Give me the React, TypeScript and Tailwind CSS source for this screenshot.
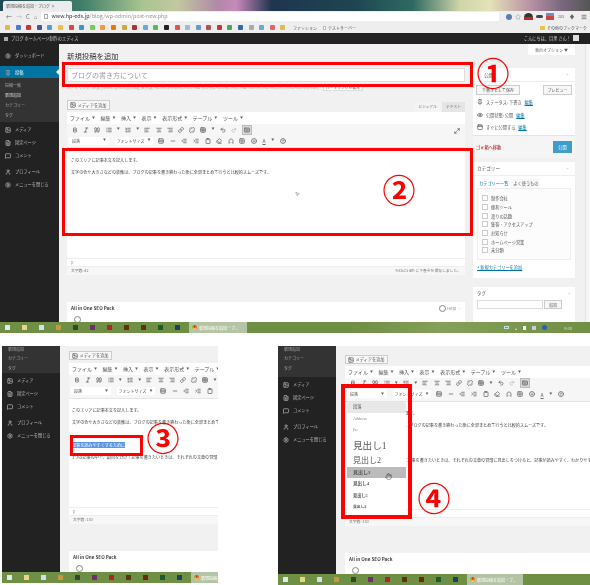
import React from "react";
import {
    AlignCenter, AlignLeft, AlignRight, Bold, Calendar, ChevronUp, Clipboard, Eraser, Eye, Grid2x2, Hand,
    HelpCircle, Image, Indent, Italic, Keyboard, Link, List, ListOrdered, Maximize2, MessageSquare, Minus, MousePointer2,
    Omega, Outdent, Pin, Quote, Redo2, Rows3, Settings, Smile, Star, Table, Undo2, Unlink, User, FileText, Menu
} from "lucide-react";

const Ic = ({icon: Icon, className = "text-[#666]"}: {icon: any; className?: string}) => <Icon className={"w-[6px] h-[6px] shrink-0 " + className} strokeWidth={3}/>;

const Arrow = () => <span className="text-[3px] text-[#666]">▼</span>;

const Taskbar = ({tabWidth, label, gradient}: {tabWidth: string; label: string; gradient?: boolean}) => {
    const colors = ["bg-[#dfe8ef]", "bg-[#e8d58a]", "bg-[#cfe0f0]", "bg-[#c69a3c]", "bg-[#2d4a2d]", "bg-[#6d2f70]", "bg-[#b3222b]", "bg-[#5a3510]", "bg-[#6a2c10]", "bg-[#1c5c2c]", "bg-[#1d3f63]"];
    return <div className={"h-[11px] flex items-center pl-[5px] shrink-0 " + (gradient ? "bg-[linear-gradient(90deg,#6f8f45,#6f8f45_60%,#85a058_75%,#6f8f45)]" : "bg-[#6f8f45]")}>
        {colors.map((c, i) => <div key={i} className="w-[17px] shrink-0 flex"><span className={"w-[5px] h-[5px] " + c}/></div>)}
        <div className={"ml-[-3px] h-full bg-[#b5c4a4] flex items-center gap-[2px] px-[3px] overflow-hidden shrink-0 text-[4px] text-white whitespace-nowrap " + tabWidth}>
            <span className="w-[5px] h-[5px] rounded-full bg-[conic-gradient(#d33,#fc3,#3a5)] shrink-0"/>{label}
        </div>
        {gradient && <div className="ml-auto mr-[18px] flex items-center gap-[6px] text-[4px] text-[#dde]">
            <span className="w-[5px] h-[3px] border border-[#cdd]"/><span>▴</span><span className="w-[3px] h-[4px] bg-white"/><span className="w-[4px] h-[4px] bg-[#ccd]"/><span className="w-[5px] h-[5px] rounded-full bg-[#2b5fb0]"/>
            <span className="ml-[11px]">9:30</span>
        </div>}
    </div>;
};

const MenuItem = ({icon, label, className = ""}: {icon: any; label: string; className?: string}) =>
    <div className={"flex items-center gap-[4px] pl-[5px] h-[13px] text-[4.2px] text-[#bbb] whitespace-nowrap " + className}>
        <Ic icon={icon} className="text-[#aaa]"/>{label}
    </div>;

const LowerMenu = () => <>
    <MenuItem icon={Image} label="メディア" className="mt-[1px]"/>
    <MenuItem icon={FileText} label="固定ページ"/>
    <MenuItem icon={MessageSquare} label="コメント"/>
    <MenuItem icon={User} label="プロフィール" className="mt-[3px]"/>
    <MenuItem icon={Settings} label="メニューを閉じる"/>
</>;

const MenuBar = () => <div className="h-[12px] bg-white flex items-center gap-[5.5px] px-[3px] text-[5px] text-[#555] whitespace-nowrap">
    {["ファイル", "編集", "挿入", "表示", "表示形式", "テーブル", "ツール"].map(m => <span key={m} className="flex items-center gap-[2px]">{m}<Arrow/></span>)}
</div>;

const Toolbar = () => <div className="bg-[#f6f6f6] h-[24px] border-b border-[#e5e5e5] px-[5px] flex flex-col">
    <div className="h-[11px] flex items-center gap-[5.2px]">
        <Ic icon={Bold}/><Ic icon={Italic}/><Ic icon={Quote}/><Ic icon={List}/><Arrow/><Ic icon={ListOrdered}/><Arrow/><Ic icon={AlignLeft}/><Ic icon={AlignCenter}/><Ic icon={AlignRight}/><Ic icon={Link}/><Ic icon={Unlink}/><Ic icon={Table}/><Arrow/><Ic icon={Undo2}/><Ic icon={Redo2} className="text-[#bbb]"/>
        <span className="bg-[#d8d8d8] border border-[#bbb] p-[1px] flex"><Ic icon={Keyboard}/></span>
    </div>
    <div className="h-[11px] flex items-center gap-[5.6px] ml-[-3px]">
        <span className="w-[40px] h-[8px] shrink-0 bg-white flex items-center justify-between px-[3px] text-[4px] text-[#555]">段落<Arrow/></span>
        <span className="w-[38px] h-[8px] shrink-0 bg-white flex items-center justify-between px-[2px] text-[4px] text-[#555] whitespace-nowrap">フォントサイズ<Arrow/></span>
        <Ic icon={Rows3}/><Ic icon={Minus}/><Ic icon={Outdent}/><Ic icon={Indent}/><Ic icon={Clipboard}/><Ic icon={Eraser}/><Ic icon={Omega}/><Ic icon={Grid2x2}/><Ic icon={Smile}/><span className="underline text-[5px] text-[#666]">A</span><Arrow/><Ic icon={HelpCircle}/>
    </div>
</div>;

const SeoBox = ({className, help}: {className: string; help?: boolean}) => <div className={"bg-white " + className}>
    <div className="h-[12px] flex items-center justify-between px-[4px] text-[4.6px] font-bold text-[#444] whitespace-nowrap">All in One SEO Pack
        {help && <span className="flex items-center gap-[1px] font-normal text-[4px] text-[#888]"><span className="w-[7px] h-[7px] rounded-full border border-[#888]"/>Help<ChevronUp className="ml-[1px] w-[3px] h-[3px]"/></span>}
    </div>
    <div className="ml-[7px] mt-[2px] w-[7px] h-[7px] rounded-full border border-[#888]"/>
</div>;

const BookmarkBar = () => {
    const dots = ["bg-[#e9b44c]", "bg-[#4a7cc9]", "bg-[#c33]", "bg-[#3b5998]", "bg-[#4aa0d8]", "bg-[#e8c54a]", "bg-[#d44]", "bg-[#39c]", "bg-[#7c5]", "bg-[#e94]", "bg-[#e70]", "bg-[#ca3]", "bg-[#a33]", "bg-[#6ad]", "bg-[#5b5]", "bg-[#222]", "bg-[#d55]", "bg-[#9bd]", "bg-[#69c]", "bg-[#a55]", "bg-[#c33]", "bg-[#4a5]", "bg-[#36a]", "bg-[#aaa]", "bg-[#6ad]", "bg-[#d66]", "bg-[#db5]"];
    return <div className="h-[11px] bg-[#eeeeee] flex items-center pl-[5px] text-[4px] text-[#555] whitespace-nowrap">
        {dots.map((c, i) => <div key={i} className="w-[10.6px] shrink-0"><span className={"block w-[5px] h-[5px] rounded-[1px] " + c}/></div>)}
        <span className="ml-[2px]">ファッション</span>
        <span className="ml-[6px] w-[3px] h-[4px] bg-white border border-[#bbb]"/>
        <span className="ml-[2px]">テストサーバー</span>
        <span className="ml-auto mr-[3px] flex items-center gap-[2px]"><span className="w-[5px] h-[4px] bg-[#e8c54a]"/>その他のブックマーク</span>
    </div>;
};

const CategoryItem = ({label}: {label: string}) => <div className="h-[8.7px] flex items-center gap-[3px] text-[4.2px] text-[#555] whitespace-nowrap">
    <span className="w-[6px] h-[6px] bg-white border border-[#ccc]"/>{label}
</div>;

const BrowserIcons = () => <div className="w-[87px] shrink-0 flex items-center text-[#666]">
    <span className="ml-[3px] w-[6px] h-[6px] rounded-full bg-[#5a7fb5]"/>
    <Star className="ml-[3px] w-[6px] h-[6px] text-[#999]"/>
    <span className="ml-[3px] w-[9px] h-[7px] rounded-t-full bg-[linear-gradient(#333_60%,#c22_60%)]"/>
    <span className="ml-[3px] w-[7px] h-[3px] rounded-full bg-[#444]"/>
    <span className="ml-[3px] w-[8px] h-[7px] bg-[linear-gradient(#6a8fc0_50%,#c44_50%)]"/>
    <span className="ml-[4px] text-[3.6px]">203</span>
    <span className="ml-[5px] text-[6px] leading-[6px]">♦</span>
    <Menu className="ml-[6px] w-[6px] h-[6px]" strokeWidth={3}/>
</div>;

const TopShot = () => <div className="relative h-[333px] shrink-0 flex flex-col">
    <div className="h-[11px] flex items-end pl-[3px] bg-[linear-gradient(90deg,#1f4a52,#3f7f6a_14%,#a8c48e_24%,#c2c8a0_30%,#b088a8_37%,#c88ab8_40%,#1f3550_46%,#1d4650_60%,#2f6a62_70%,#cfd6a8_78%,#e4e2b8_83%,#b890a4_90%,#7a6a80_95%,#555)]">
        <div className="w-[69px] h-[10px] bg-[#ececec] rounded-t-[2px] flex items-center px-[3px] text-[4px] text-[#555] whitespace-nowrap overflow-hidden">新規投稿を追加・ブログ ×</div>
    </div>
    <div className="h-[11px] bg-[#eeeeee] flex items-center gap-[4px] pl-[6px] text-[#666]">
        <span className="text-[6px]">←</span><span className="text-[6px] text-[#bbb]">→</span><span className="text-[6px]">C</span><span className="text-[6px]">⌂</span>
        <div className="flex-1 h-[9px] bg-white flex items-center gap-[3px] px-[3px] text-[5.4px] text-[#999] whitespace-nowrap">
            <span className="w-[4px] h-[5px] border border-[#aaa]"/><span><span className="text-[#333]">www.hp-eds.jp</span>/blog/wp-admin/post-new.php</span>
        </div>
        <BrowserIcons/>
    </div>
    <BookmarkBar/>
    <div className="h-[11px] bg-[#222] flex items-center px-[4px] text-[4.2px] text-[#ccc] whitespace-nowrap">
        <span className="w-[4px] h-[4px] bg-[#aaa] mr-[3px]"/>ブログ ホームページ制作のエディス
        <span className="ml-auto mr-[7px] flex items-center gap-[2px]">こんにちは、目黒 さん！<span className="w-[6px] h-[6px] bg-[#ddd]"/></span>
    </div>
    <div className="flex-1 flex min-h-0 overflow-hidden">
        <div className="w-[59px] shrink-0 bg-[#222]">
            <MenuItem icon={Settings} label="ダッシュボード" className="mt-[5px]"/>
            <div className="relative h-[12px] mt-[4px] bg-[#0074a2]">
                <MenuItem icon={Pin} label="投稿" className="h-[12px] text-white"/>
                <span className="absolute right-0 top-[3px] border-y-[3px] border-r-[3px] border-y-transparent border-r-[#f1f1f1]"/>
            </div>
            <div className="h-[44px] bg-[#333] pt-[2px] pl-[5px] text-[4px] text-[#aaa]">
                <div className="h-[10px] flex items-center">投稿一覧</div>
                <div className="h-[10px] flex items-center text-[#ddd]">新規追加</div>
                <div className="h-[10px] flex items-center">カテゴリー</div>
                <div className="h-[10px] flex items-center">タグ</div>
            </div>
            <LowerMenu/>
        </div>
        <div className="flex-1 bg-[#f1f1f1] flex min-w-0">
            <div className="w-[406px] pl-[8px] shrink-0 flex flex-col">
                <div className="h-[24px] pt-[7px] text-[7.4px] text-[#333] whitespace-nowrap leading-[10px]">新規投稿を追加</div>
                <div className="h-[14px] bg-white border border-[#ddd] flex items-center px-[3px] text-[7px] text-[#999]">ブログの書き方について</div>
                <div className="h-[11px] flex items-center gap-[3px] text-[3.8px] text-[#aaa] whitespace-nowrap">
                    パーマリンク: http://www.hp-eds.jp/blog/未分類/%e3%83%96%e3%83%ad%e3%82%b0%e3%81%ae%e6%9b%b8%e3%81%8d%e6%96%b9/
                    <span className="ml-[1px] bg-white border border-[#ddd] px-[2px] text-[#666]">パーマリンクを編集</span>
                </div>
                <div className="h-[19px] flex items-end justify-between">
                    <span className="mb-[2px] w-[43px] h-[10px] bg-[#f7f7f7] border border-[#ccc] flex items-center justify-center gap-[1px] text-[4.2px] text-[#555] whitespace-nowrap"><Ic icon={Image}/>メディアを追加</span>
                    <span className="flex text-[3.8px] text-[#777]">
                        <span className="h-[10px] w-[27px] bg-[#f4f4f4] flex items-center justify-center">ビジュアル</span>
                        <span className="ml-[1px] h-[10px] w-[23px] bg-[#e5e5e5] flex items-center justify-center">テキスト</span>
                    </span>
                </div>
                <div className="relative"><MenuBar/><Toolbar/>
                    <span className="absolute right-[5px] top-[16px]"><Ic icon={Maximize2}/></span>
                </div>
                <div className="h-[110px] bg-white px-[4px] pt-[6px] text-[4.1px] text-[#444] whitespace-nowrap relative overflow-hidden">
                    <div className="h-[12px] leading-[12px]">このエリアに記事本文を記入します。</div>
                    <div className="h-[12px] leading-[12px]">文字の色や大きさなどの装飾は、ブログの記事を書き終わった後に全部まとめて行うと比較的スムーズです。</div>
                    <span className="absolute left-[228px] top-[43px] text-[#666]"><MousePointer2 className="w-[5px] h-[6px]"/></span>
                </div>
                <div className="h-[9px] bg-white border-y border-[#eee] flex items-center px-[4px] text-[3.8px] text-[#999]">p</div>
                <div className="h-[8px] bg-[#f7f7f7] flex items-center justify-between px-[4px] text-[3.8px] text-[#777] whitespace-nowrap">
                    <span>文字数: 42</span><span>9:45:23 am に下書きを保存しました。</span>
                </div>
                <SeoBox help className="mt-[27px] flex-1 min-h-0 overflow-hidden relative"/>
            </div>
            <div className="w-[102px] ml-[8px] shrink-0 relative flex flex-col">
                <div className="absolute right-[0px] top-[0px] w-[47px] h-[11px] bg-white flex items-center justify-center text-[4px] text-[#666] whitespace-nowrap">表示オプション ▼</div>
                <div className="mt-[24px] bg-white h-[90px] flex flex-col text-[4.2px] text-[#555] whitespace-nowrap">
                    <div className="h-[14px] flex items-center justify-between px-[6px] pl-[11px] border-b border-[#eee] text-[5px]">公開<ChevronUp className="w-[3px] h-[3px]"/></div>
                    <div className="flex justify-between px-[3px] mt-[3px] text-[4px]">
                        <span className="h-[10px] w-[44px] bg-[#f7f7f7] border border-[#ccc] flex items-center justify-center">下書きとして保存</span>
                        <span className="h-[10px] w-[29px] bg-[#f7f7f7] border border-[#ccc] flex items-center justify-center">プレビュー</span>
                    </div>
                    <div className="flex items-center gap-[3px] pl-[4px] h-[12.5px] mt-[1px]"><Ic icon={Pin}/>ステータス: 下書き<span className="text-[#0074a2] underline">編集</span></div>
                    <div className="flex items-center gap-[3px] pl-[4px] h-[12.5px]"><Ic icon={Eye}/>公開状態: 公開<span className="text-[#0074a2] underline">編集</span></div>
                    <div className="flex items-center gap-[3px] pl-[4px] h-[12.5px]"><Ic icon={Calendar}/>すぐに公開する<span className="text-[#0074a2] underline">編集</span></div>
                    <div className="flex-1 mt-[1px] bg-[#f5f5f5] border-t border-[#e5e5e5] flex items-center justify-between pl-[3px] pr-[3px] text-[#a00]">ゴミ箱へ移動
                        <span className="w-[19px] h-[12px] bg-[#3f9dcb] text-white flex items-center justify-center">公開</span>
                    </div>
                </div>
                <div className="mt-[4px] bg-white h-[116px] px-[4px] text-[4.2px] whitespace-nowrap text-[#555]">
                    <div className="h-[14px] flex items-center justify-between border-b border-[#eee] mx-[-4px] pl-[4px] pr-[6px] text-[4.6px]">カテゴリー<ChevronUp className="w-[3px] h-[3px]"/></div>
                    <div className="flex h-[9px] items-center mt-[3px]"><span className="text-[#0074a2] px-[2px]">カテゴリー一覧</span><span className="bg-[#f8f8f8] px-[2px] ml-[1px] h-full flex items-center">よく使うもの</span></div>
                    <div className="h-[72px] border border-[#eee] bg-[#fcfcfc] pl-[4px] pt-[5px]">
                        {["制作会社", "便利ツール", "渡りの話題", "集客・アクセスアップ", "お知らせ", "ホームページ営業", "未分類"].map(c => <CategoryItem key={c} label={c}/>)}
                    </div>
                    <div className="mt-[4px] text-[#0074a2] underline">+ 新規カテゴリーを追加</div>
                </div>
                <div className="mt-[9px] bg-white flex-1 min-h-0 overflow-hidden text-[4.4px] text-[#555]">
                    <div className="h-[12px] flex items-center justify-between px-[4px]">タグ<ChevronUp className="w-[3px] h-[3px]"/></div>
                    <div className="flex gap-[1px] px-[4px] mt-[1px]"><span className="w-[66px] h-[9px] border border-[#ddd]"/><span className="w-[18px] h-[9px] bg-[#f7f7f7] border border-[#ccc] flex items-center justify-center text-[4px]">追加</span></div>
                </div>
            </div>
            <div className="ml-auto w-[5px] bg-[#f5f5f5] border-l border-[#e5e5e5]"/>
        </div>
    </div>
    <Taskbar tabWidth="w-[58px]" label="新規投稿を追加・ブ..." gradient/>
    <div className="absolute left-[62px] top-[62px] w-[411px] h-[25px] border-[3px] border-[#f00]"/>
    <div className="absolute left-[62px] top-[148px] w-[411px] h-[88px] border-[3px] border-[#f00]"/>
    <span className="absolute left-[473px] top-[50px] text-[33px] font-bold leading-[44px] w-[40px] text-center text-[#f00]">①</span>
    <span className="absolute left-[379px] top-[167px] text-[33px] font-bold leading-[44px] w-[40px] text-center text-[#f00]">②</span>
</div>;

const Dropdown = () => {
    const base = "flex items-center pl-[6px] whitespace-nowrap text-[#555]";
    return <div className="absolute left-[69px] top-[56px] w-[59px] h-[113px] bg-white font-['Liberation_Serif','Noto_Sans_CJK_JP',serif]">
        <div className={base + " h-[11px] bg-[#e8e8e8] text-[4.2px]"}>段落</div>
        <div className={base + " h-[12px] text-[4.2px] text-[#888]"}>Address</div>
        <div className={base + " h-[12px] text-[3.8px] text-[#888]"}>Pre</div>
        <div className={base + " h-[18px] text-[9.6px]"}>見出し1</div>
        <div className={base + " h-[12px] text-[8px]"}>見出し2</div>
        <div className={base + " h-[11px] text-[5px] font-bold bg-[#bbbbbb] text-[#444]"}>見出し3</div>
        <div className={base + " h-[12px] text-[4.6px] font-bold"}>見出し4</div>
        <div className={base + " h-[12px] text-[4.2px] font-bold"}>見出し5</div>
        <div className={base + " h-[11px] text-[3.8px] font-bold"}>見出し6</div>
        <Hand className="absolute left-[38px] top-[70px] w-[7px] h-[9px] text-[#555]"/>
    </div>;
};

const Shot = ({className, subMenu, mediaRow, children, overlays, tab}: {className: string; subMenu: string; mediaRow: string; children: React.ReactNode; overlays: React.ReactNode; tab: string}) =>
    <div className={"relative flex flex-col overflow-hidden shrink-0 " + className}>
        <div className="flex-1 flex min-h-0">
            <div className="w-[58px] shrink-0 bg-[#222]">
                <div className={"bg-[#333] pl-[6px] text-[4px] text-[#aaa] " + subMenu}>
                    <div className="h-[7px] leading-[7px] overflow-hidden">新規追加</div>
                    <div className="h-[10px] flex items-center">カテゴリー</div>
                    <div className="h-[10px] flex items-center">タグ</div>
                </div>
                <LowerMenu/>
            </div>
            <div className="flex-1 min-w-0 bg-[#f1f1f1] pl-[9px] flex flex-col overflow-hidden">
                <div className={mediaRow}>
                    <span className="w-[43px] h-[9px] bg-[#f7f7f7] border border-[#ccc] flex items-center justify-center gap-[1px] text-[4.2px] text-[#555] whitespace-nowrap"><Ic icon={Image}/>メディアを追加</span>
                </div>
                <MenuBar/>
                <Toolbar/>
                {children}
                <div className="h-[9px] bg-white border-y border-[#eee] flex items-center px-[4px] text-[3.8px] text-[#999]">p</div>
                <div className="h-[8px] bg-[#f7f7f7] flex items-center px-[4px] text-[3.8px] text-[#777] whitespace-nowrap">文字数: 130</div>
                <SeoBox className="flex-1 mt-[27px]"/>
            </div>
        </div>
        <Taskbar tabWidth={tab} label="新規投稿を追加・ブ..."/>
        {overlays}
    </div>;

const Body = ({selected, h}: {selected: boolean; h: string}) => <div className={"bg-white px-[3px] pt-[5px] text-[4.1px] text-[#444] whitespace-nowrap overflow-hidden " + h}>
    <div className="h-[12px] leading-[12px]">このエリアに記事本文を記入します。</div>
    <div className="h-[12px] leading-[12px]">文字の色や大きさなどの装飾は、ブログの記事を書き終わった後に全部まとめて行うと比較的スムーズです。</div>
    <div className="h-[12px] mt-[11px] leading-[12px]">{selected ? <span className="bg-[#5a95e8] text-white">記事を読みやすくするために</span> : "記事を読みやすくするために"}</div>
    <div className="h-[12px] leading-[12px]">1つの記事の中で、項目を分けて記事を書きたいときは、それぞれの文章の冒頭に見出しをつけると、記事が読みやすく、わかりやすくなります。</div>
</div>;

const App = () => {
    return <div className="w-[590px] h-[585px] overflow-hidden bg-white flex flex-col blur-[0.6px] font-['Noto_Sans_CJK_JP','Noto_Sans',sans-serif]">
        <TopShot/>
        <div className="mt-[13px] flex items-start">
            <Shot className="ml-[2px] w-[216px] h-[237px]" subMenu="h-[27px]" mediaRow="h-[17px] pt-[5px]" tab="w-[32px]"
                  overlays={<>
                      <div className="absolute left-[68px] top-[89px] w-[73px] h-[21px] border-[3px] border-[#f00]"/>
                      <span className="absolute left-[141px] top-[69px] text-[33px] font-bold leading-[44px] w-[40px] text-center text-[#f00]">③</span>
                  </>}>
                <Body selected h="h-[109px]"/>
            </Shot>
            <Shot className="ml-[60px] w-[312px] h-[239px]" subMenu="h-[31px]" mediaRow="h-[20px] pt-[9px]" tab="w-[56px]"
                  overlays={<>
                      <Dropdown/>
                      <div className="absolute left-[63px] top-[38px] w-[71px] h-[135px] border-[4px] border-[#f00]"/>
                      <span className="absolute left-[136px] top-[129px] text-[33px] font-bold leading-[44px] w-[40px] text-center text-[#f00]">④</span>
                  </>}>
                <Body selected={false} h="h-[108px]"/>
            </Shot>
        </div>
    </div>;
};

export default App;
